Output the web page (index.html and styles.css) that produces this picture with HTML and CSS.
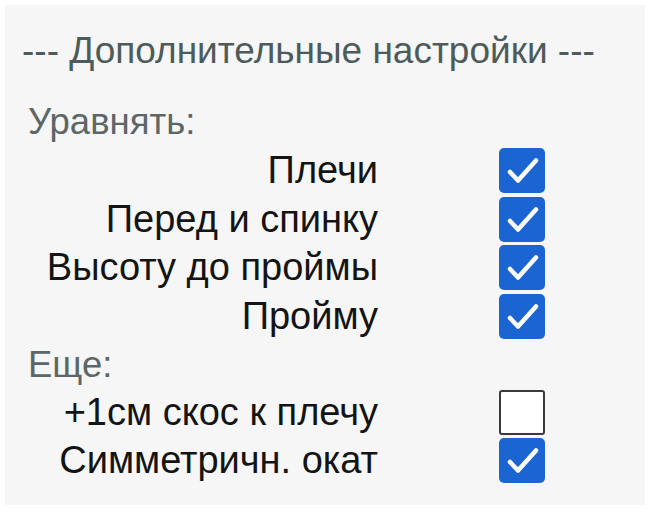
FILE: index.html
```html
<!DOCTYPE html>
<html lang="ru">
  <head>
    <meta charset="UTF-8" />
    <title>Дополнительные настройки</title>
    <link rel="stylesheet" href="styles.css">
  </head>
  <body>
    <div class="panel">
      <h1 class="title">--- Дополнительные настройки ---</h1>

      <div class="group-title">Уравнять:</div>
      <div class="options">
        <label class="opt-label" for="o1">Плечи</label>
        <input type="checkbox" id="o1" checked />
        <label class="opt-label" for="o2">Перед и спинку</label>
        <input type="checkbox" id="o2" checked />
        <label class="opt-label" for="o3">Высоту до проймы</label>
        <input type="checkbox" id="o3" checked />
        <label class="opt-label" for="o4">Пройму</label>
        <input type="checkbox" id="o4" checked />
      </div>

      <div class="group-title second">Еще:</div>
      <div class="options">
        <label class="opt-label" for="o5">+1см скос к плечу</label>
        <input type="checkbox" id="o5" />
        <label class="opt-label" for="o6">Симметричн. окат</label>
        <input type="checkbox" id="o6" checked />
      </div>
    </div>
  </body>
</html>
```

FILE: styles.css
```css
body {
  margin: 0;
  padding: 5px;
  background: #fff;
  font-family: "Liberation Sans", Arial, sans-serif;
}
.panel {
  width: 640px;
  height: 500px;
  box-sizing: border-box;
  background: #f6f6f6;
  padding: 26px 0 0 17px;
}
.title {
  margin: 0 0 31px 0;
  font-weight: normal;
  font-size: 37px;
  line-height: 40px;
  color: #4d5b5a;
}
.group-title {
  font-size: 36.5px;
  line-height: 40px;
  color: #5b6767;
  margin: 0 0 6px 6px;
}
.group-title.second {
  margin-top: 6px;
  margin-bottom: 5px;
}
.options {
  display: grid;
  grid-template-columns: 356px 46px;
  column-gap: 121px;
  row-gap: 3.5px;
  align-items: center;
}
.opt-label {
  text-align: right;
  font-size: 38px;
  line-height: 45px;
  color: #141414;
}
.options input {
  appearance: none;
  margin: 0;
  width: 46px;
  height: 45px;
  box-sizing: border-box;
  border: 2px solid #3a3a3a;
  border-radius: 3px;
  background: #fff;
}
.options input:checked {
  border: none;
  border-radius: 5px;
  background: #1b65d2 url("data:image/svg+xml,%3Csvg xmlns='http://www.w3.org/2000/svg' viewBox='0 0 46 45'%3E%3Cpath d='M11 24 L19 32.5 L37 12.5' fill='none' stroke='white' stroke-width='4.5' stroke-linecap='round' stroke-linejoin='round'/%3E%3C/svg%3E") no-repeat center / 100% 100%;
}
```
